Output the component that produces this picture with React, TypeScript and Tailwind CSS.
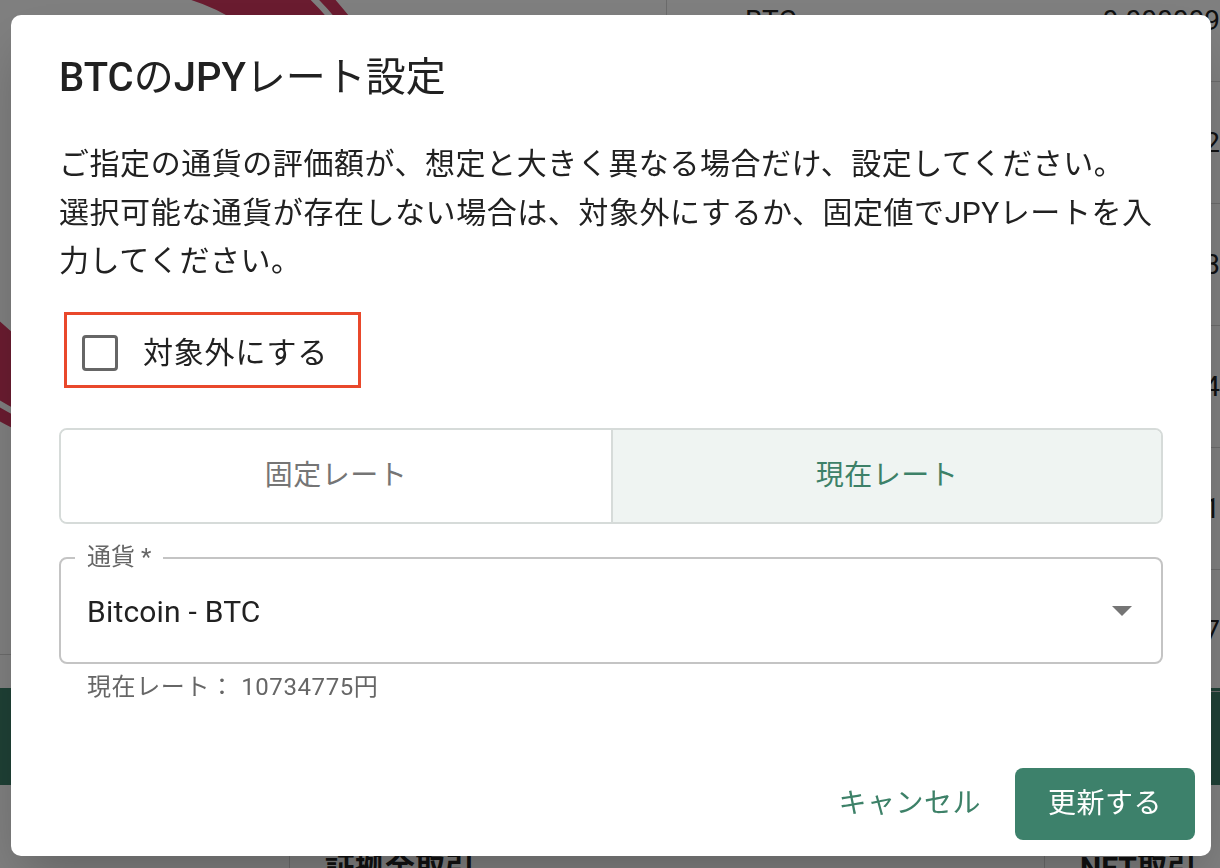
import React from "react";

const holdings = [
  { sym: "BTC", amt: "0.000009" },
  { sym: "ETH", amt: "0.004512" },
  { sym: "XRP", amt: "12.3" },
  { sym: "LTC", amt: "0.0154" },
  { sym: "BCH", amt: "0.0021" },
  { sym: "MONA", amt: "1.57" },
];

function Donut() {
  // only slivers of this chart peek out from behind the dialog
  return (
    <svg width="667" height="655" className="block">
      <path
        d="M94.2 -37.1 A223.5 223.5 0 1 1 -77 259.4"
        fill="none"
        stroke="#d43860"
        strokeWidth="63"
      />
      <path
        d="M86.6 -79.9 A267 267 0 1 1 -117.9 274.3"
        fill="none"
        stroke="#d43860"
        strokeWidth="12"
      />
    </svg>
  );
}

function Background() {
  return (
    <div className="h-[868px] w-[1220px] overflow-hidden bg-white text-[#212121]">
      <div className="flex h-[688px]">
        <div className="w-[667px] border-r border-[#d6d6d6]">
          <div className="h-[655px] border-b border-[#d6d6d6]">
            <Donut />
          </div>
        </div>
        <div className="-mt-[40px] flex-1">
          {holdings.map((h) => (
            <div
              key={h.sym}
              className="flex h-[122px] items-center justify-between border-b border-[#d6d6d6] pl-[78px] text-[28px]"
            >
              <span>{h.sym}</span>
              <span>{h.amt}</span>
            </div>
          ))}
        </div>
      </div>
      <div className="h-[97px] bg-[#3d816b]" />
      <div className="flex h-[83px] text-[30px] font-bold">
        <div className="w-[290px] border-r border-[#d6d6d6]" />
        <div className="w-[755px] border-r border-[#d6d6d6] pl-[35px] pt-[60px]">証拠金取引</div>
        <div className="flex-1 pl-[35px] pt-[60px]">NET取引</div>
      </div>
    </div>
  );
}

export default function App() {
  return (
    <div className="relative h-[868px] w-[1220px] overflow-hidden font-[family-name:Roboto,'Noto_Sans_CJK_JP',sans-serif]">
      <Background />

      <div className="fixed inset-0 flex items-start justify-start bg-black/50 pl-[11px] pt-[15px]">
        <div className="flex h-[841px] w-[1200px] flex-col rounded-[10px] bg-white shadow-2xl">
          <div className="px-[48px] pt-[39px]">
            <h2 className="text-[40px] leading-[48px] font-normal text-[#212121]">
              <span className="font-medium">BTC</span>の<span className="font-medium">JPY</span>レート設定
            </h2>

            <p className="mt-[38px] text-[30px] leading-[48.5px] tracking-[0.55px] text-[#212121]">
              ご指定の通貨の評価額が、想定と大きく異なる場合だけ、設定してください。
              <br />
              選択可能な通貨が存在しない場合は、対象外にするか、固定値でJPYレートを入力してください。
            </p>

            <div className="mt-[26px] ml-[5px] flex h-[76px] w-[297px] items-center border-[3px] border-[#e9482b] pl-[15px] pt-[6px]">
              <span className="block h-[36px] w-[36px] rounded-[4px] border-[3px] border-[#666666]" />
              <span className="ml-[25px] text-[30px] leading-[40px] tracking-[0.8px] text-[#212121]">
                対象外にする
              </span>
            </div>

            <div className="mt-[40px] grid h-[96px] grid-cols-2 overflow-hidden rounded-[8px] border-2 border-[#d6dbd9] text-[28px] tracking-[0.5px]">
              <button className="flex items-center justify-center bg-white text-[#757575]">固定レート</button>
              <button className="flex items-center justify-center border-l-2 border-[#d6dbd9] bg-[#eff4f2] text-[#3d8168]">
                現在レート
              </button>
            </div>

            <div className="relative mt-[33px] flex h-[107px] items-center rounded-[8px] border-2 border-[#c4c4c4] pl-[26px] pr-[15px] pt-[3px]">
              <span className="absolute -top-[14px] left-[14px] bg-white px-[12px] text-[24px] leading-[24px] text-[#666666]">
                通貨 *
              </span>
              <span className="flex-1 text-[30px] tracking-[0.2px] text-[#212121]">Bitcoin - BTC</span>
              <svg width="48" height="48" viewBox="0 0 24 24" className="-mt-[3px] fill-[#757575]">
                <path d="M7 10l5 5 5-5z" />
              </svg>
            </div>

            <p className="mt-[7px] pl-[28px] text-[24px] leading-[32px] tracking-[0.6px] text-[#666666]">
              現在レート： 10734775円
            </p>
          </div>

          <div className="mt-auto flex items-center justify-end gap-[18px] px-[16px] pb-[16px]">
            <button className="h-[72px] rounded-[8px] px-[16px] text-[28px] tracking-[0.5px] text-[#3d8168]">
              キャンセル
            </button>
            <button className="h-[72px] rounded-[8px] bg-[#3d816b] px-[33px] text-[28px] tracking-[0.5px] text-white">
              更新する
            </button>
          </div>
        </div>
      </div>
    </div>
  );
}
